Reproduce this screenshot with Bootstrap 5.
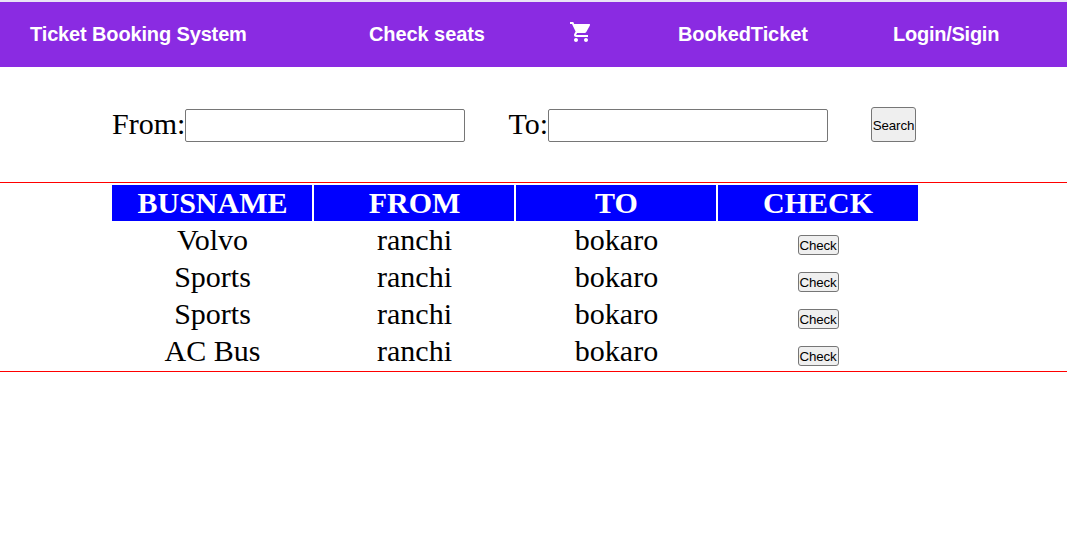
<!DOCTYPE html>
<html lang="en">
<head>
<meta charset="utf-8">
<meta name="viewport" content="width=device-width, initial-scale=1">
<title>Ticket Booking System</title>
<link href="https://cdn.jsdelivr.net/npm/bootstrap@5.3.0/dist/css/bootstrap.min.css" rel="stylesheet">
<style>
body{font:30px/34px "Liberation Serif",serif;color:#000;background:#fff;overflow:hidden}
.topbar{height:67px;background:#8a2be2;border-top:2px solid #e9e4f5;padding:0 0 2px 30px;font:bold 20px/24px "Liberation Sans",sans-serif;color:#fff}
.topbar a{color:#fff;text-decoration:none;white-space:nowrap}
.brand{width:339px;letter-spacing:-.14px}.seats{width:200px;letter-spacing:-.08px}.cart{width:109px}.booked{width:215px;letter-spacing:-.08px}.login{letter-spacing:-.25px}
.cart svg{display:block;margin-bottom:4px}
.search{height:115px;padding:40px 0 0 112px}
.search label{line-height:34px}
.field{width:280px;height:33px;border:1px solid #767676;border-radius:2px;margin-top:2px}
.from{width:396.5px}.to{width:362.5px}
.plain{font:13.333px/15px "Liberation Sans",sans-serif;letter-spacing:-.15px;color:#000;background:#efefef;border:1px solid #767676;border-radius:3px;padding:0;text-align:center}
.go{width:45px;height:35px;padding-top:2px}
.chk{width:41px;height:20px;margin-top:10px;padding-top:1px}
.buses{border-top:1px solid red;border-bottom:1px solid red;height:190px;padding:2px 0 0 112px}
.line{display:grid;grid-template-columns:repeat(4,200px);column-gap:2px;height:36px;margin-bottom:1px;text-align:center;line-height:36px}
.line>:not(:last-child){padding-left:1px}
.line:first-child>*{background:#00f;color:#fff;font-weight:bold}
</style>
</head>
<body>
<nav class="topbar d-flex align-items-center">
<a class="brand" href="#">Ticket Booking System</a>
<a class="seats" href="#">Check seats</a>
<a class="cart" href="#" aria-label="Cart"><svg width="24" height="24" viewBox="0 0 24 24" fill="#fff"><path d="M7 18c-1.1 0-1.99.9-1.99 2S5.9 22 7 22s2-.9 2-2-.9-2-2-2zM1 2v2h2l3.6 7.59-1.35 2.45c-.16.28-.25.61-.25.96 0 1.1.9 2 2 2h12v-2H7.42c-.14 0-.25-.11-.25-.25l.03-.12.9-1.63h7.45c.75 0 1.41-.41 1.75-1.03l3.58-6.49A1 1 0 0 0 20 4H5.21l-.94-2H1zm16 16c-1.1 0-1.99.9-1.99 2s.89 2 1.99 2 2-.9 2-2-.9-2-2-2z"/></svg></a>
<a class="booked" href="#">BookedTicket</a>
<a class="login" href="#">Login/Sigin</a>
</nav>
<form class="search d-flex align-items-start">
<div class="from d-flex"><label for="f">From:</label><input class="field" id="f"></div>
<div class="to d-flex"><label for="t">To:</label><input class="field" id="t"></div>
<button type="button" class="plain go">Search</button>
</form>
<main class="buses">
<div class="line"><div>BUSNAME</div><div>FROM</div><div>TO</div><div>CHECK</div></div>
<div class="line"><div>Volvo</div><div>ranchi</div><div>bokaro</div><div class="d-flex justify-content-center align-items-center"><button class="plain chk">Check</button></div></div>
<div class="line"><div>Sports</div><div>ranchi</div><div>bokaro</div><div class="d-flex justify-content-center align-items-center"><button class="plain chk">Check</button></div></div>
<div class="line"><div>Sports</div><div>ranchi</div><div>bokaro</div><div class="d-flex justify-content-center align-items-center"><button class="plain chk">Check</button></div></div>
<div class="line"><div>AC Bus</div><div>ranchi</div><div>bokaro</div><div class="d-flex justify-content-center align-items-center"><button class="plain chk">Check</button></div></div>
</main>
<script src="https://cdn.jsdelivr.net/npm/bootstrap@5.3.0/dist/js/bootstrap.bundle.min.js"></script>
</body>
</html>
